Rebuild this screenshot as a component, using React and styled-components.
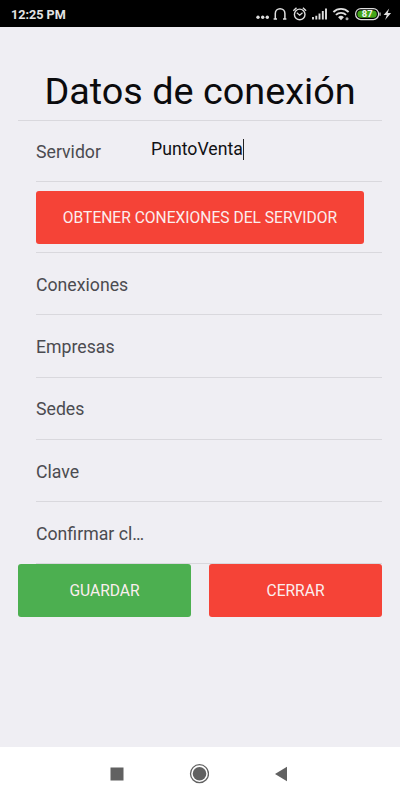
import React, { useState } from 'react'
import styled, { createGlobalStyle } from 'styled-components'

const fields = ['Conexiones', 'Empresas', 'Sedes', 'Clave', 'Confirmar cl…']

const StatusIcons = () => (
  <svg width="140" height="20" viewBox="252 4 140 20" fill="none" stroke="#dedede">
    {/* notifications */}
    <g fill="#dedede" stroke="none">
      <circle cx="258" cy="17.3" r="1.7" />
      <circle cx="262.7" cy="17.3" r="1.7" />
      <circle cx="267.3" cy="17.3" r="1.7" />
    </g>
    {/* headphones */}
    <path d="M273.6 19h3.4M283 19h3.4M275.3 19V13.5a4.8 4.8 0 0 1 9.6 0V19" strokeWidth="1.5" />
    {/* alarm */}
    <circle cx="299.7" cy="14.4" r="5.3" strokeWidth="1.4" />
    <path d="M293.3 10.8l3.2-3M306.1 10.8l-3.2-3" strokeWidth="1.4" />
    <path d="M296.8 12.8l2.9 2.4 2.8-2.4" strokeWidth="1.2" />
    {/* signal */}
    <path d="M313 17v2.4M316.3 15.7v3.7M319.5 13.5v5.9M322.8 11v8.4M326 8.4v11" strokeWidth="1.9" />
    {/* wifi */}
    <path d="M333.4 12a10.7 10.7 0 0 1 15.2 0M335.9 14.9a7.2 7.2 0 0 1 10.2 0" strokeWidth="1.8" />
    <path d="M338.1 17.2a4.1 4.1 0 0 1 5.8 0L341 20.2z" fill="#dedede" stroke="none" />
    <circle cx="347" cy="18.8" r="1.5" fill="#aaa" stroke="none" />
    {/* battery */}
    <rect x="355.6" y="8.6" width="23" height="11" rx="5.3" strokeWidth="1.2" />
    <rect x="357.4" y="10.4" width="19.4" height="7.4" rx="3.5" fill="#43a618" stroke="none" />
    <path d="M380 12.4v3.4" strokeWidth="1.2" />
    <text x="367.2" y="17.4" textAnchor="middle" fill="#f2f2f2" stroke="none" fontSize="9.4" fontWeight="700">87</text>
    {/* charging */}
    <path d="M389.2 8.6l-5.6 6.4h3.2l-1.7 4.9 6-6.8h-3.4z" fill="#dedede" stroke="none" />
  </svg>
)

const App = () => {
  const [servidor, setServidor] = useState('PuntoVenta')

  return (
    <Screen>
      <GlobalStyle />
      <StatusBar>
        <Clock>12:25 PM</Clock>
        <StatusIcons />
      </StatusBar>
      <Content>
        <Title>Datos de conexión</Title>
        <Form>
          <Item $height={61}>
            <Label>Servidor</Label>
            <InputBox>
              <Input value={servidor} onChange={e => setServidor(e.target.value)} />
              <Cursor />
            </InputBox>
          </Item>
          <ButtonItem>
            <Button $width="328px">OBTENER CONEXIONES DEL SERVIDOR</Button>
          </ButtonItem>
          {fields.map(field => (
            <Item key={field}>
              <Label>{field}</Label>
            </Item>
          ))}
        </Form>
        <Actions>
          <Button $color="#4caf50">GUARDAR</Button>
          <Button>CERRAR</Button>
        </Actions>
      </Content>
      <NavBar>
        <svg width="14" height="14" fill="#616161"><rect x="0.5" y="0.5" width="13" height="13" /></svg>
        <svg width="20" height="20">
          <circle cx="10.5" cy="9.7" r="9" fill="none" stroke="#616161" strokeWidth="1.3" />
          <circle cx="10.5" cy="9.7" r="6.8" fill="#616161" />
        </svg>
        <svg width="14" height="16" fill="#616161"><path d="M1 8L13 .7v14.6z" /></svg>
      </NavBar>
    </Screen>
  )
}

const GlobalStyle = createGlobalStyle`
  * {
    box-sizing: border-box;
  }
  body {
    margin: 0;
    font-family: Roboto, sans-serif;
  }
`;

const Screen = styled.div`
  display: flex;
  flex-direction: column;
  width: 400px;
  height: 800px;
  background: #efeef3;
  overflow: hidden;
`;

const StatusBar = styled.div`
  display: flex;
  align-items: center;
  justify-content: space-between;
  height: 27px;
  padding: 1px 8px 0 11px;
  background: #000;
`;

const Clock = styled.span`
  color: #e4e4e4;
  font-size: 12.6px;
  font-weight: 700;
  padding-top: 1px;
`;

const Content = styled.div`
  flex: 1;
  padding: 36px 18px 0;
`;

const Title = styled.h1`
  margin: 0;
  height: 57px;
  line-height: 57px;
  color: #0b0b0d;
  font-size: 37.8px;
  font-weight: 400;
  text-align: center;
  white-space: nowrap;
`;

const Form = styled.div`
  border-top: 1px solid #d9d8dd;
  padding-left: 18px;
`;

const Item = styled.div`
  display: flex;
  align-items: center;
  height: ${props => props.$height || 62.3}px;
  border-bottom: 1px solid #d9d8dd;
`;

const ButtonItem = styled.div`
  height: 71px;
  padding-top: 9px;
  border-bottom: 1px solid #d9d8dd;
`;

const Label = styled.label`
  width: 115px;
  padding-top: 2px;
  color: #4b4b50;
  font-size: 17.7px;
  white-space: nowrap;
`;

const InputBox = styled.div`
  display: flex;
  align-items: center;
  padding-bottom: 4px;
`;

const Input = styled.input`
  width: 92px;
  padding: 0;
  border: 0;
  outline: none;
  background: transparent;
  color: #111114;
  font-family: inherit;
  font-size: 17.7px;
`;

const Cursor = styled.span`
  width: 1px;
  height: 21px;
  background: #222;
`;

const Button = styled.button`
  width: ${props => props.$width || '100%'};
  height: 53px;
  padding: 0;
  border: 0;
  border-radius: 3px;
  background: ${props => props.$color || '#f54337'};
  color: #fbeeee;
  font-family: inherit;
  font-size: 15.6px;
`;

const Actions = styled.div`
  display: grid;
  grid-template-columns: 1fr 1fr;
  gap: 18px;
`;

const NavBar = styled.div`
  display: flex;
  align-items: center;
  justify-content: space-between;
  height: 53px;
  padding: 0 112px 0 110px;
  background: #fff;
`;

export default App
